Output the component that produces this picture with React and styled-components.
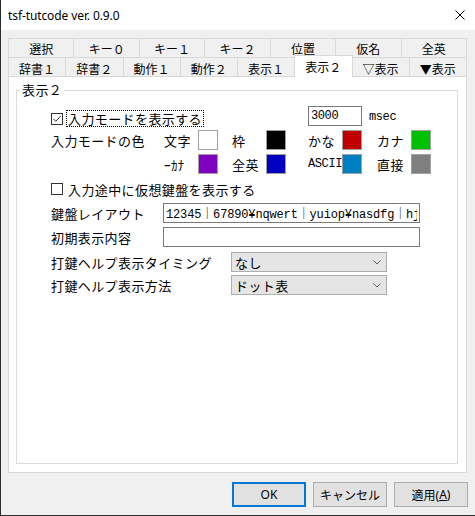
import React from 'react';
import styled, { createGlobalStyle } from 'styled-components';

const jp = `"Noto Sans CJK JP", sans-serif`;
const mono = `"Liberation Mono", "Noto Sans CJK JP", monospace`;

const Global = createGlobalStyle`
  html, body { margin: 0; padding: 0; background: #fff; }
  body { width: 475px; height: 516px; overflow: hidden; }
  * { box-sizing: border-box; }
`;

const Window = styled.div`
  width: 475px;
  height: 516px;
  border-left: 1px solid #2b2b2b;
  border-bottom: 1px solid #2b2b2b;
  display: flex;
  flex-direction: column;
  background: #f0f0f0;
`;

const TitleBar = styled.div`
  flex: none;
  height: 30px;
  background: #fff;
  display: flex;
  align-items: center;
  justify-content: space-between;
  padding: 0 10px 0 7px;
`;

const Title = styled.span`
  font-family: "Noto Sans", sans-serif;
  font-size: 12px;
  color: #000;
  letter-spacing: -0.1px;
`;

const CloseIcon = () => (
  <svg width="10" height="10" viewBox="0 0 10 10">
    <path d="M0.5 0.5 L9.5 9.5 M9.5 0.5 L0.5 9.5" stroke="#000" strokeWidth="1" fill="none" />
  </svg>
);

const Body = styled.div`
  flex: 1;
  display: flex;
  flex-direction: column;
  padding: 8px 8px 8px 7px;
`;

const TabRow = styled.div`
  display: flex;
  height: 19px;
`;

const Tab = styled.div`
  flex: 1;
  min-width: 0;
  border: 1px solid #d9d9d9;
  border-bottom: none;
  margin-left: -1px;
  &:first-child { margin-left: 0; }
  background: ${p => (p.$active ? '#fff' : '#f0f0f0')};
  display: flex;
  justify-content: center;
  align-items: center;
  padding-top: ${p => (p.$low ? 2 : 0)}px;
  font-family: ${jp};
  font-size: 12px;
  color: #000;
  white-space: nowrap;
  ${p =>
    p.$active &&
    `
    position: relative;
    z-index: 2;
    margin-top: -2px;
    height: 22px;
    padding-top: 0;
  `}
`;

const Panel = styled.div`
  height: 397px;
  flex: none;
  border: 1px solid #d9d9d9;
  background: #fff;
  display: flex;
  flex-direction: column;
  padding: 5px 8px 8px 7px;
`;

const Group = styled.fieldset`
  flex: 1;
  margin: 0;
  padding: 0;
  min-width: 0;
  border: 1px solid #dcdcdc;
`;

const Legend = styled.legend`
  margin-left: 3px;
  padding: 0 2px;
  font-family: ${jp};
  font-size: 13px;
  line-height: 16px;
  letter-spacing: 0.4px;
  color: #000;
`;

const GroupContent = styled.div`
  display: flex;
  flex-direction: column;
  padding: 8px 0 0 34px;
  font-family: ${jp};
  font-size: 13px;
  letter-spacing: 0.4px;
  color: #000;
`;

const GridRow = styled.div`
  display: grid;
  grid-template-columns: 113px 68px 76px 69px 54px;
  height: ${p => p.$h}px;
  margin-top: ${p => p.$mt || 0}px;
  align-items: ${p => p.$align || 'center'};
  white-space: nowrap;
`;

const CheckItem = styled.div`
  display: flex;
  align-items: center;
  gap: 3px;
  height: ${p => p.$h || 17}px;
  margin-top: ${p => p.$mt || 0}px;
  grid-column: ${p => p.$span || 'auto'};
  white-space: nowrap;
`;

const FocusLabel = styled.span`
  height: 17px;
  line-height: 15px;
  padding: 0 1px;
  border: 1px dotted ${p => (p.$focused ? '#000' : 'transparent')};
`;

const CheckBox = ({ checked }) => (
  <svg width="12" height="12" viewBox="0 0 12 12" style={{ flex: 'none' }}>
    <rect x="0.5" y="0.5" width="11" height="11" fill="#fff" stroke="#333" />
    {checked && <path d="M2.5 6 L4.8 8.3 L9.5 3.2" stroke="#333" strokeWidth="1" fill="none" />}
  </svg>
);

const NumberWrap = styled.div`
  grid-column: 4 / 6;
  display: flex;
  align-items: center;
  height: 20px;
`;

const TextBox = styled.input`
  width: ${p => p.$w}px;
  height: 20px;
  border: 1px solid #7a7a7a;
  background: #fff;
  padding: 0 2px;
  margin: 0;
  font-family: ${mono};
  font-size: 12px;
  letter-spacing: ${p => p.$ls ?? -0.4}px;
  color: #000;
  outline: none;
`;

const Unit = styled.span`
  margin-left: 7px;
  font-family: ${mono};
  font-size: 12px;
  letter-spacing: -0.4px;
  padding-top: 2px;
`;

const Pair = styled.div`
  display: flex;
  align-items: center;
`;

const PairLabel = styled.span`
  width: 34px;
  flex: none;
  font-family: ${p => (p.$mono ? mono : jp)};
  font-size: ${p => (p.$mono ? 12 : 13)}px;
  letter-spacing: ${p => (p.$mono ? '-0.4px' : '0.4px')};
`;

const Swatch = styled.span`
  width: 20px;
  height: 20px;
  flex: none;
  border: 1px solid #a0a0a0;
  background: ${p => p.$color};
`;

const FieldRow = styled.div`
  display: flex;
  align-items: center;
  height: 20px;
  margin-top: ${p => p.$mt || 0}px;
  white-space: nowrap;
`;

const FieldLabel = styled.span`
  width: ${p => p.$w}px;
  flex: none;
`;

const Combo = styled.div`
  width: 156px;
  height: 20px;
  background: #e5e5e5;
  border: 1px solid #adadad;
  display: flex;
  align-items: center;
  justify-content: space-between;
  padding: 0 5px 0 3px;
`;

const Chevron = () => (
  <svg width="8" height="5" viewBox="0 0 8 5">
    <path d="M0.5 0.5 L4 4 L7.5 0.5" stroke="#606060" strokeWidth="1" fill="none" />
  </svg>
);

const ButtonBar = styled.div`
  display: flex;
  justify-content: flex-end;
  gap: 7px;
  margin-top: 9px;
  margin-right: -1px;
`;

const Button = styled.div`
  width: 74px;
  height: 25px;
  background: #e1e1e1;
  border: ${p => (p.$default ? '2px solid #0078d7' : '1px solid #adadad')};
  display: flex;
  align-items: center;
  justify-content: center;
  font-family: "Noto Sans", "Noto Sans CJK JP", sans-serif;
  font-size: 12px;
  color: #000;
`;

const row1 = ['選択', 'キー０', 'キー１', 'キー２', '位置', '仮名', '全英'];
const row2 = ['辞書１', '辞書２', '動作１', '動作２', '表示１', '表示２', '▽表示', '▼表示'];

export default function App() {
  return (
    <>
      <Global />
      <Window>
        <TitleBar>
          <Title>tsf-tutcode ver. 0.9.0</Title>
          <CloseIcon />
        </TitleBar>
        <Body>
          <TabRow>
            {row1.map(t => (
              <Tab key={t}>{t}</Tab>
            ))}
          </TabRow>
          <TabRow>
            {row2.map(t => (
              <Tab key={t} $low $active={t === '表示２'}>
                {t}
              </Tab>
            ))}
          </TabRow>
          <Panel>
            <Group>
              <Legend>表示２</Legend>
              <GroupContent>
                <GridRow $h={21} $align="start">
                  <CheckItem $span="1 / 4" $mt={4}>
                    <CheckBox checked />
                    <FocusLabel $focused>入力モードを表示する</FocusLabel>
                  </CheckItem>
                  <NumberWrap>
                    <TextBox $w={54} defaultValue="3000" readOnly />
                    <Unit>msec</Unit>
                  </NumberWrap>
                </GridRow>
                <GridRow $h={20} $mt={3}>
                  <span>入力モードの色</span>
                  <Pair>
                    <PairLabel>文字</PairLabel>
                    <Swatch $color="#ffffff" />
                  </Pair>
                  <Pair>
                    <PairLabel>枠</PairLabel>
                    <Swatch $color="#000000" />
                  </Pair>
                  <Pair>
                    <PairLabel>かな</PairLabel>
                    <Swatch $color="#c00000" />
                  </Pair>
                  <Pair>
                    <PairLabel>カナ</PairLabel>
                    <Swatch $color="#00c000" />
                  </Pair>
                </GridRow>
                <GridRow $h={20} $mt={4}>
                  <span />
                  <Pair>
                    <PairLabel>ｰｶﾅ</PairLabel>
                    <Swatch $color="#8000c0" />
                  </Pair>
                  <Pair>
                    <PairLabel>全英</PairLabel>
                    <Swatch $color="#0000c0" />
                  </Pair>
                  <Pair>
                    <PairLabel $mono>ASCII</PairLabel>
                    <Swatch $color="#0080c0" />
                  </Pair>
                  <Pair>
                    <PairLabel>直接</PairLabel>
                    <Swatch $color="#808080" />
                  </Pair>
                </GridRow>
                <CheckItem $h={18} $mt={6}>
                  <CheckBox />
                  <FocusLabel>入力途中に仮想鍵盤を表示する</FocusLabel>
                </CheckItem>
                <FieldRow $mt={5}>
                  <FieldLabel $w={112}>鍵盤レイアウト</FieldLabel>
                  <TextBox $w={257} $ls={-0.15} defaultValue="12345｜67890¥nqwert｜yuiop¥nasdfg｜hjkl;" readOnly />
                </FieldRow>
                <FieldRow $mt={4}>
                  <FieldLabel $w={112}>初期表示内容</FieldLabel>
                  <TextBox $w={257} defaultValue="" readOnly />
                </FieldRow>
                <FieldRow $mt={5}>
                  <FieldLabel $w={180}>打鍵ヘルプ表示タイミング</FieldLabel>
                  <Combo>
                    <span>なし</span>
                    <Chevron />
                  </Combo>
                </FieldRow>
                <FieldRow $mt={3}>
                  <FieldLabel $w={180}>打鍵ヘルプ表示方法</FieldLabel>
                  <Combo>
                    <span>ドット表</span>
                    <Chevron />
                  </Combo>
                </FieldRow>
              </GroupContent>
            </Group>
          </Panel>
          <ButtonBar>
            <Button $default>OK</Button>
            <Button>キャンセル</Button>
            <Button>
              適用(<u>A</u>)
            </Button>
          </ButtonBar>
        </Body>
      </Window>
    </>
  );
}
